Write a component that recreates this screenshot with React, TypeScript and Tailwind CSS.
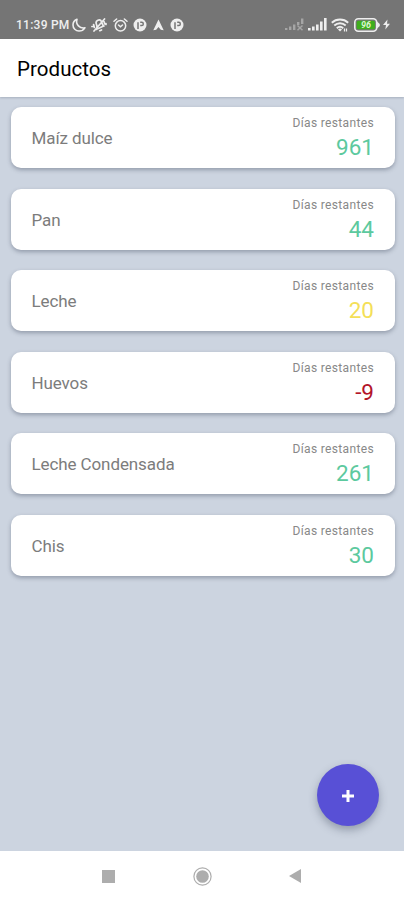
import React from 'react';

interface Product {
  name: string;
  days: number;
  color: string;
}

const products: Product[] = [
  { name: 'Maíz dulce', days: 961, color: 'text-[#5cc99e]' },
  { name: 'Pan', days: 44, color: 'text-[#5cc99e]' },
  { name: 'Leche', days: 20, color: 'text-[#f4df58]' },
  { name: 'Huevos', days: -9, color: 'text-[#b3152a]' },
  { name: 'Leche Condensada', days: 261, color: 'text-[#5cc99e]' },
  { name: 'Chis', days: 30, color: 'text-[#5cc99e]' },
];

const MoonIcon: React.FC = () => (
  <svg width="14" height="14" viewBox="0 0 14 14" fill="none" stroke="currentColor" strokeWidth="1.6" strokeLinejoin="round">
    <path d="M5 1.200C2.500 2.200 1 4.400 1 6.900 1 10.300 3.700 13 7 13c2.500 0 4.700-1.200 5.900-3.200C8 10.800 3.200 6.500 5 1.200Z" />
  </svg>
);

const MutedIcon: React.FC = () => (
  <svg width="16" height="14" viewBox="0 0 16 14" fill="none" stroke="currentColor" strokeWidth="1.7" strokeLinecap="round">
    <path d="M5.500 11.300 12.800 8 11.700 6.700 10.600 3.800C9.900 2.300 8.300 1.700 6.900 2.300S4.700 4.300 5.300 5.800L6 8.300 5.500 11.300M8.800 12.700l1.700-.8M13.500 1 3 13M2.600 6.500l.8 3M.9 8.500h1M13 3.500l.8 2.500M15 5.500v1" />
  </svg>
);

const AlarmIcon: React.FC = () => (
  <svg width="15" height="14" viewBox="0 0 15 14" fill="none" stroke="currentColor" strokeWidth="1.500" strokeLinecap="round">
    <circle cx="7.500" cy="7.800" r="5.200" />
    <path d="M1 3.200 3.600 1M14 3.200 11.400 1M5.500 7l2 1.800 2-1.800" />
  </svg>
);

const AppBadgeIcon: React.FC = () => (
  <svg width="14" height="14" viewBox="0 0 14 14">
    <circle cx="7" cy="7" r="6.500" fill="currentColor" />
    <path d="M5 11V4.300M7.200 4.300h1.500a1.600 1.600 0 0 1 0 3.200H7.200" fill="none" stroke="#757575" strokeWidth="1.500" />
  </svg>
);

const ArrowIcon: React.FC = () => (
  <svg width="11" height="12" viewBox="0 0 11 12" fill="currentColor">
    <path d="M5.500.5 10.700 11.300 7.800 10.800 5.500 8 3.200 10.800.3 11.300Z" />
  </svg>
);

const SignalIcon: React.FC<{ off?: boolean }> = ({ off }) => (
  <svg width="19" height="13" viewBox="0 0 19 13" fill="currentColor" opacity={off ? 0.4 : 1}>
    {off ? (
      <path d="M0 10h2.400v2H0zM4 8.500h2.400V12H4zM8 6.500h2.400V12H8zM12 4h2.400v3H12zM16 .5h2.400V6H16z" />
    ) : (
      <path d="M0 10h2.600v2.500H0zM4 8.500h2.600v4H4zM8 6.500h2.600v6H8zM12 3.500h2.600v9H12zM16 0h2.600v12.500H16z" />
    )}
    {off && <path d="M12.500 7.500l5 4.700M17.500 7.500l-5 4.700" stroke="currentColor" strokeWidth="1.500" />}
  </svg>
);

const WifiIcon: React.FC = () => (
  <svg width="18" height="14" viewBox="0 0 18 14" fill="none" stroke="currentColor" strokeWidth="1.900">
    <path d="M.8 4.700C5.500.4 12.500.4 17.200 4.700M3.300 7.500c3.300-3 8.100-3 11.400 0M5.800 10.200c1.900-1.700 4.500-1.700 6.400 0" />
    <path d="M7 11.500 9 13.500l2-2a2.800 2.800 0 0 0-4 0Z" fill="currentColor" stroke="none" />
    <path d="M13.500 10.500v3M15.500 10.500v3" strokeWidth="1.200" />
  </svg>
);

const BatteryIcon: React.FC = () => (
  <svg width="26" height="14" viewBox="0 0 26 14">
    <rect x=".8" y=".8" width="21.900" height="12.400" rx="3.500" fill="#757575" stroke="currentColor" strokeWidth="1.600" />
    <path d="M23 3.500 25.800 6v2L23 10.500Z" fill="currentColor" />
    <rect x="2.700" y="2.700" width="18.200" height="8.600" rx="1.500" fill="#3fae1d" />
    <text x="12" y="10.200" textAnchor="middle" fontSize="9" fontWeight="700" fontStyle="italic" fill="#d9f4d0">96</text>
  </svg>
);

const StatusBar: React.FC = () => (
  <div className="h-[38.500px] shrink-0 flex items-center pt-[11px] pl-4 pr-[14px] bg-[#757575] text-[#eeeeee]">
    <span className="w-[55px] text-[12px] font-medium leading-[14px] tracking-[0.250px] whitespace-nowrap">11:39 PM</span>
    <div className="ml-[1px] flex items-center">
      <MoonIcon />
      <div className="ml-[5px]"><MutedIcon /></div>
      <div className="ml-[6px]"><AlarmIcon /></div>
      <div className="ml-[5px]"><AppBadgeIcon /></div>
      <div className="ml-[6px]"><ArrowIcon /></div>
      <div className="ml-[6px]"><AppBadgeIcon /></div>
    </div>
    <div className="ml-auto flex items-center">
      <SignalIcon off />
      <div className="ml-[4px]"><SignalIcon /></div>
      <div className="ml-[4px]"><WifiIcon /></div>
      <div className="ml-[5px]"><BatteryIcon /></div>
      <svg className="ml-[3px]" width="7" height="11" viewBox="0 0 7 11" fill="currentColor">
        <path d="M4.500.5 0 6h3L2.300 10.500 7 4.800H4Z" />
      </svg>
    </div>
  </div>
);

const ProductCard: React.FC<{ product: Product }> = ({ product }) => (
  <div className="h-[61px] shrink-0 flex items-center justify-between pl-[20.500px] pr-[20.500px] bg-white rounded-[10px] shadow-[0_2px_4px_rgba(60,70,90,0.4)]">
    <span className="pt-px text-[17px] leading-5 tracking-[-0.100px] text-[#7c7c7c]">{product.name}</span>
    <div className="flex flex-col items-end pt-px">
      <span className="text-[12px] leading-[14px] tracking-[0.350px] text-[#888888]">Días restantes</span>
      <span className={`mt-[4px] text-[22.500px] leading-[26px] ${product.color}`}>{product.days}</span>
    </div>
  </div>
);

const NavBar: React.FC = () => (
  <div className="h-[49px] shrink-0 bg-white flex items-center pl-[102px] pt-px">
    <div className="w-[13px] h-[13px] bg-[#adadad]" />
    <svg className="ml-[78px]" width="19" height="19" viewBox="0 0 19 19">
      <circle cx="9.500" cy="9.500" r="8.600" fill="none" stroke="#adadad" strokeWidth="1.200" />
      <circle cx="9.500" cy="9.500" r="6.300" fill="#adadad" />
    </svg>
    <svg className="ml-[77px]" width="12" height="14" viewBox="0 0 12 14" fill="#adadad">
      <path d="M12 0v14L0 7Z" />
    </svg>
  </div>
);

const App: React.FC = () => {
  return (
    <div className="w-full h-[900px] flex flex-col overflow-hidden bg-[#ccd4e0] font-[Roboto,sans-serif]">
      <StatusBar />
      <header className="h-[58px] shrink-0 flex items-center pl-[17px] pt-[2px] bg-white shadow-[0_1px_2px_rgba(60,70,90,0.25)]">
        <h1 className="text-[20.500px] leading-6 font-normal tracking-[0.050px] text-black">Productos</h1>
      </header>

      <main className="relative flex-1 flex flex-col gap-[20.600px] pt-[10.500px] pl-[11px] pr-[9.500px]">
        {products.map((product) => (
          <ProductCard key={product.name} product={product} />
        ))}

        {/* Floating add button */}
        <button className="absolute right-[25px] bottom-[25px] w-[62px] h-[62px] pt-[2px] rounded-full bg-[#5850d6] flex items-center justify-center shadow-[0_4px_8px_rgba(60,70,90,0.4)]">
          <svg width="12" height="12" viewBox="0 0 12 12" stroke="white" strokeWidth="3">
            <path d="M6 0v12M0 6h12" />
          </svg>
        </button>
      </main>

      <NavBar />
    </div>
  );
};

export default App;
